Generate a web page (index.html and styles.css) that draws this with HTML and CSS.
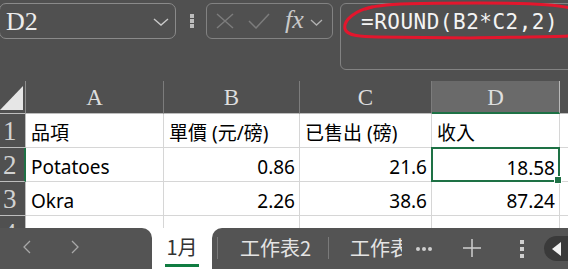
FILE: index.html
```html
<!DOCTYPE html>
<html>
<head>
	<meta charset="utf-8">
	<link rel="stylesheet" href="styles.css">
</head>
<body>
	<div class="topbar">
		<div class="namebox">
			<span class="ref">D2</span>
			<svg class="chev" width="16" height="8" viewBox="0 0 16 8"><path d="M1 1 L8 7 L15 1" fill="none" stroke="#c8c8c8" stroke-width="1.4"/></svg>
		</div>
		<div class="grip"><i></i><i></i><i></i></div>
		<div class="fxbtns">
			<svg class="btn-x" width="18" height="16" viewBox="0 0 18 16"><path d="M1 1 L17 15 M17 1 L1 15" stroke="#7c7c7c" stroke-width="1.5"/></svg>
			<svg class="btn-ok" width="22" height="16" viewBox="0 0 22 16"><path d="M1 8 L8 15 L21 1" fill="none" stroke="#7c7c7c" stroke-width="1.5"/></svg>
			<span class="fx">fx</span>
			<svg class="btn-chev" width="13" height="7" viewBox="0 0 13 7"><path d="M1 1 L6.5 6 L12 1" fill="none" stroke="#b0b0b0" stroke-width="1.3"/></svg>
		</div>
		<div class="formula"><span>=ROUND(B2*C2,2)</span></div>
		<svg class="mark" width="230" height="44" viewBox="340 0 230 44">
			<path d="M372 7 C356 10 343 20 345 29 C347 36 362 37 378 37 L470 38 C520 37 552 37 570 36" fill="none" stroke="#e3162d" stroke-width="3" stroke-linecap="round"/>
			<path d="M366 9 C378 3 430 3 480 3 C530 3 556 4 570 8" fill="none" stroke="#e3162d" stroke-width="3" stroke-linecap="round"/>
		</svg>
	</div>

	<div class="sheet">
		<div class="corner"><svg width="24" height="25" viewBox="0 0 24 25"><path d="M0 25 L23 1 L23 25 Z" fill="#e6e6e6"/></svg></div>
		<div class="colhead">A</div>
		<div class="colhead">B</div>
		<div class="colhead">C</div>
		<div class="colhead sel">D</div>
		<div class="colhead blank"></div>

		<div class="rowhead">1</div>
		<div class="cell">品項</div>
		<div class="cell">單價 (元/磅)</div>
		<div class="cell">已售出 (磅)</div>
		<div class="cell">收入</div>
		<div class="cell"></div>

		<div class="rowhead sel">2</div>
		<div class="cell">Potatoes</div>
		<div class="cell num">0.86</div>
		<div class="cell num">21.6</div>
		<div class="cell num active">18.58<b class="handle"></b></div>
		<div class="cell"></div>

		<div class="rowhead">3</div>
		<div class="cell">Okra</div>
		<div class="cell num">2.26</div>
		<div class="cell num">38.6</div>
		<div class="cell num">87.24</div>
		<div class="cell"></div>

		<div class="rowhead">4</div>
		<div class="cell"></div>
		<div class="cell"></div>
		<div class="cell"></div>
		<div class="cell"></div>
		<div class="cell"></div>
	</div>

	<div class="tabs">
		<div class="nav">
			<svg class="arrow" width="9" height="14" viewBox="0 0 9 14"><path d="M8 1 L2 7 L8 13" fill="none" stroke="#a8a8a8" stroke-width="1.3"/></svg>
			<svg class="arrow" width="9" height="14" viewBox="0 0 9 14"><path d="M1 1 L7 7 L1 13" fill="none" stroke="#a8a8a8" stroke-width="1.3"/></svg>
		</div>
		<div class="tab-active"><span>1月</span><i class="underline"></i></div>
		<div class="rest">
			<i class="sep first"></i>
			<span class="tab">工作表2</span>
			<i class="sep"></i>
			<span class="tab cut">工作表3</span>
			<span class="more"><i></i><i></i><i></i></span>
			<svg class="plus" width="18" height="18" viewBox="0 0 18 18"><path d="M9 0 V18 M0 9 H18" stroke="#cfcfcf" stroke-width="1.5"/></svg>
			<span class="vdots"><i></i><i></i><i></i></span>
			<span class="pill"><svg width="10" height="14" viewBox="0 0 10 14"><path d="M9 0 L0 7 L9 14 Z" fill="#f2f2f2"/></svg></span>
		</div>
	</div>
</body>
</html>
```

FILE: styles.css
```css
html, body
{
	margin:0;
	padding:0;
	width:568px;
	height:269px;
	overflow:hidden;
	background:#505050;
	font-family:"Noto Sans","Noto Sans CJK TC",sans-serif;
}

/* formula bar */
.topbar
{
	position:relative;
	height:81px;
	display:flex;
	align-items:flex-start;
	padding-top:3px;
	box-sizing:border-box;
}
.namebox
{
	margin-left:-1px;
	width:177px;
	height:36px;
	box-sizing:border-box;
	border:1px solid #8a8a8a;
	border-radius:7px;
	display:flex;
	align-items:center;
	justify-content:space-between;
	padding:0 6px 0 6px;
	flex-shrink:0;
}
.ref
{
	font-family:"Liberation Serif",serif;
	font-size:26px;
	color:#ececec;
	line-height:1;
	margin-top:2px;
}
.chev
{
	margin-top:1px;
}
.grip
{
	margin-left:14px;
	margin-top:11px;
	display:flex;
	flex-direction:column;
	gap:1px;
	flex-shrink:0;
}
.grip i
{
	display:block;
	width:4px;
	height:4px;
	background:#bdbdbd;
}
.fxbtns
{
	margin-left:12px;
	width:127px;
	height:36px;
	box-sizing:border-box;
	border:1px solid #828282;
	border-radius:6px;
	display:flex;
	align-items:center;
	padding-left:9px;
	flex-shrink:0;
}
.btn-ok
{
	margin-left:14px;
}
.fx
{
	margin-left:15px;
	font-family:"Liberation Serif",serif;
	font-style:italic;
	font-size:26px;
	color:#c9c9c9;
	line-height:1;
	margin-top:-2px;
}
.btn-chev
{
	margin-left:6px;
	margin-top:2px;
}
.formula
{
	margin-left:7px;
	flex:1;
	margin-right:-12px;
	height:67px;
	box-sizing:border-box;
	border:1px solid #828282;
	border-radius:6px;
	padding:5px 0 0 20px;
}
.formula span
{
	font-family:"DejaVu Sans Mono",monospace;
	font-size:21px;
	letter-spacing:0.5px;
	color:#f4f4f4;
	line-height:26px;
}
.mark
{
	position:absolute;
	left:340px;
	top:0;
}

/* grid */
.sheet
{
	height:147px;
	overflow:hidden;
	background:#fff;
	display:grid;
	grid-template-columns:26px 138px 136px 132px 128px 1fr;
	grid-template-rows:33px 34px 34px 34px 34px;
}
.corner
{
	background:#505050;
	border-right:1px solid #8c8c8c;
	border-bottom:1px solid #bdbdbd;
	box-sizing:border-box;
	padding-top:4px;
}
.corner svg
{
	display:block;
}
.colhead
{
	background:#505050;
	border-right:1px solid #7c7c7c;
	border-bottom:1px solid #bdbdbd;
	box-sizing:border-box;
	text-align:center;
	font-family:"Liberation Serif",serif;
	font-size:23px;
	line-height:33px;
	color:#dedede;
}
.colhead.sel
{
	background:#6a6a6a;
	border-right:1px solid #b8b8b8;
	border-bottom:2px solid #1e7145;
}
.colhead.blank
{
	border-right:none;
}
.rowhead
{
	background:#505050;
	border-right:1px solid #bdbdbd;
	border-bottom:1px solid #bdbdbd;
	box-sizing:border-box;
	font-family:"Liberation Serif",serif;
	font-size:27px;
	line-height:34px;
	padding-left:3px;
	color:#d2d2d2;
}
.rowhead.sel
{
	border-right:2px solid #1e7145;
}
.cell
{
	position:relative;
	border-right:1px solid #d6d6d6;
	border-bottom:1px solid #d6d6d6;
	box-sizing:border-box;
	font-size:19px;
	line-height:33px;
	padding:3px 4px 0 5px;
	color:#000;
	white-space:nowrap;
}
.num
{
	text-align:right;
}
.cell.active
{
	border:2px solid #1e7145;
	margin:-1px 0 0 -1px;
	padding:3px 3px 0 5px;
}
.handle
{
	position:absolute;
	right:-4px;
	bottom:-4px;
	width:6px;
	height:6px;
	background:#1e7145;
	border:1px solid #fff;
	z-index:2;
}

/* sheet tabs */
.tabs
{
	height:41px;
	display:flex;
	background:#fff;
}
.nav
{
	width:152px;
	flex-shrink:0;
	background:#545454;
	border-radius:0 10px 0 0;
	display:flex;
	align-items:center;
	padding-left:22px;
	box-sizing:border-box;
	gap:40px;
}
.nav .arrow
{
	margin-top:-3px;
}
.tab-active
{
	width:60px;
	flex-shrink:0;
	position:relative;
	text-align:center;
	font-family:"Noto Sans CJK TC",sans-serif;
	font-size:20px;
	line-height:38px;
	color:#333;
}
.tab-active span
{
	display:block;
}
.underline
{
	position:absolute;
	left:13px;
	bottom:2px;
	width:34px;
	height:3px;
	background:#107c41;
}
.rest
{
	flex:1;
	min-width:0;
	background:#545454;
	border-radius:10px 0 0 0;
	display:flex;
	align-items:center;
	white-space:nowrap;
	overflow:hidden;
}
.rest > *
{
	flex-shrink:0;
}
.sep
{
	display:block;
	width:1px;
	height:22px;
	background:#7a7a7a;
	margin-left:17px;
	margin-top:-2px;
}
.sep.first
{
	margin-left:5px;
}
.tab
{
	font-family:"Noto Sans CJK TC",sans-serif;
	font-size:20px;
	color:#e4e4e4;
	margin-left:22px;
	margin-top:-2px;
}
.tab.cut
{
	margin-left:21px;
	width:52px;
	overflow:hidden;
}
.more
{
	margin-left:14px;
	display:flex;
	gap:2px;
}
.more i
{
	display:block;
	width:4px;
	height:4px;
	border-radius:2px;
	background:#cfcfcf;
}
.plus
{
	margin-left:31px;
	margin-top:-2px;
}
.vdots
{
	margin-left:39px;
	display:flex;
	flex-direction:column;
	gap:3px;
}
.vdots i
{
	display:block;
	width:4px;
	height:4px;
	background:#cfcfcf;
}
.pill
{
	margin-left:20px;
	width:36px;
	height:25px;
	border-radius:13px;
	background:#3a3a3a;
	display:flex;
	align-items:center;
	padding-left:8px;
	box-sizing:border-box;
}
.pill svg
{
	display:block;
}
```
